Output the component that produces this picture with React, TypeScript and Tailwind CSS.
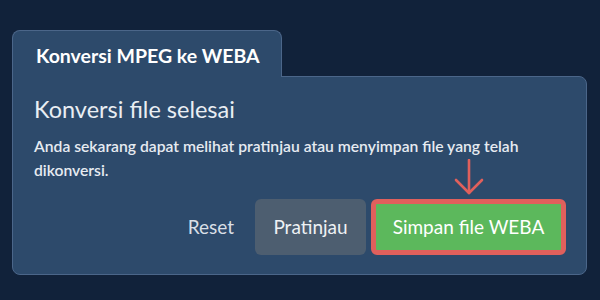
import React from 'react';

const font = { fontFamily: 'Lato, "Noto Sans", sans-serif' };

function DownArrow() {
  return (
    <svg
      className="absolute left-1/2 -translate-x-1/2 bottom-[calc(100%+4px)]"
      width="30"
      height="36"
      viewBox="0 0 30 36"
      fill="none"
      stroke="#e0605c"
      strokeWidth="2.6"
      strokeLinecap="round"
      strokeLinejoin="round"
    >
      <path d="M15 1 L15 34" />
      <path d="M2 21 L15 34 L28 21" />
    </svg>
  );
}

export default function App() {
  return (
    <div className="w-[600px] h-[300px] bg-[#11223a] pt-[30px] pl-[12px] pr-[13px]" style={font}>
      <div className="flex">
        <div className="relative z-10 -mb-px w-[270px] h-[47px] rounded-t-lg border border-b-0 border-[#4b6689] bg-[#2d4a6b] pl-[23px] pt-[11px] text-[19.5px] leading-[28px] font-bold text-white">
          Konversi MPEG ke WEBA
        </div>
      </div>
      <div className="rounded-b-lg rounded-tr-lg border border-[#4b6689] bg-[#2d4a6b] pl-[21px] pr-[20px] pt-[16px] pb-[19px]">
        <h2 className="text-[23.5px] leading-[32px] text-[#e9eef3]">Konversi file selesai</h2>
        <p className="mt-[9px] text-[15.7px] leading-[24px] font-semibold text-[#e6ebf1]">
          Anda sekarang dapat melihat pratinjau atau menyimpan file yang telah dikonversi.
        </p>
        <div className="mt-[17px] flex items-center justify-end">
          <button className="mr-[21px] text-[19px] text-[#d9dfe6]">Reset</button>
          <button className="h-[56px] w-[111px] rounded-md bg-[#4d5e70] text-[19px] text-[#eef1f4]">
            Pratinjau
          </button>
          <div className="relative ml-[5px]">
            <DownArrow />
            <button className="h-[56px] w-[195px] rounded-md border-[5px] border-[#e0605c] bg-[#5cb85c] text-[19px] text-white">
              Simpan file WEBA
            </button>
          </div>
        </div>
      </div>
    </div>
  );
}
